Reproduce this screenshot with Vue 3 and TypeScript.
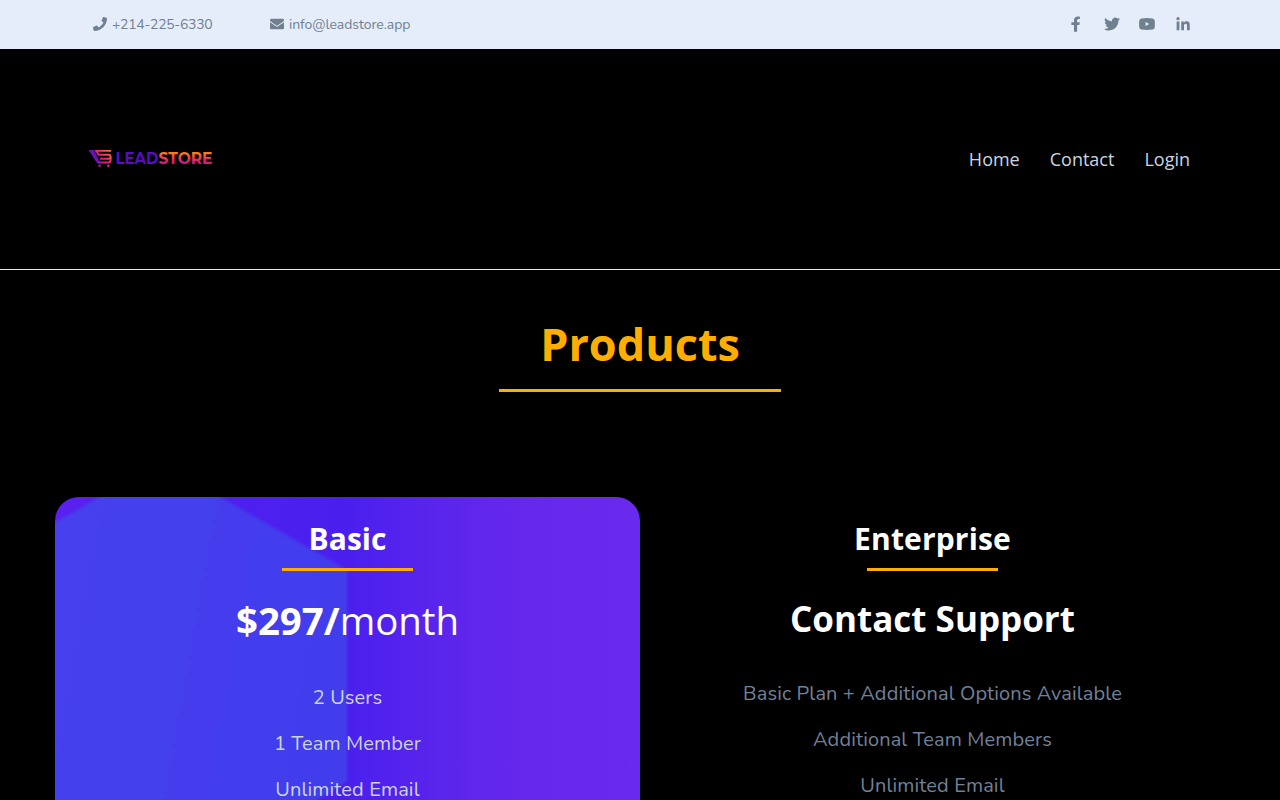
<template>
  <div class="page">
    <div class="topbar">
      <div class="contacts">
        <a class="contact phone" href="#">
          <svg class="contact-icon" viewBox="0 0 512 512">
            <path d="M493.4 24.6l-104-24c-11.3-2.6-22.9 3.3-27.5 13.9l-48 112c-4.2 9.8-1.4 21.3 6.9 28l60.6 49.6c-36 76.7-98.9 140.5-177.2 177.2l-49.6-60.6c-6.8-8.3-18.2-11.1-28-6.9l-112 48C3.9 366.5-2 378.1.6 389.4l24 104C27.1 504.2 36.7 512 48 512c256.1 0 464-207.5 464-464 0-11.2-7.7-20.9-18.6-23.4z" />
          </svg>
          <span class="contact-text">+214-225-6330</span>
        </a>
        <a class="contact email" href="#">
          <svg class="contact-icon" viewBox="0 0 512 512">
            <path d="M502.3 190.8c3.9-3.1 9.7-.2 9.7 4.7V400c0 26.5-21.5 48-48 48H48c-26.5 0-48-21.5-48-48V195.6c0-5 5.7-7.8 9.7-4.7 22.4 17.4 52.1 39.5 154.1 113.6 21.1 15.4 56.7 47.8 92.2 47.6 35.7.3 72-32.8 92.3-47.6 102-74.1 131.6-96.3 154-113.7zM256 320c23.2.4 56.6-29.2 73.4-41.4 132.7-96.3 142.8-104.7 173.4-128.7 5.8-4.5 9.2-11.5 9.2-18.9v-19c0-26.5-21.5-48-48-48H48c-26.5 0-48 21.5-48 48v19c0 7.4 3.4 14.3 9.2 18.9 30.6 23.9 40.7 32.4 173.4 128.7 16.8 12.2 50.2 41.8 73.4 41.4z" />
          </svg>
          <span class="contact-text">info@leadstore.app</span>
        </a>
      </div>
      <div class="socials">
        <svg v-for="icon in socials" :key="icon.name" class="social" viewBox="0 0 16 16">
          <path :d="icon.path" fill-rule="evenodd" />
        </svg>
      </div>
    </div>

    <header class="header">
      <svg class="logo" viewBox="0 0 126 20">
        <defs>
          <linearGradient id="cart" gradientUnits="userSpaceOnUse" x1="6" y1="16" x2="20" y2="0">
            <stop offset="0" stop-color="#7a12b0" />
            <stop offset="0.5" stop-color="#e81c78" />
            <stop offset="1" stop-color="#fb7030" />
          </linearGradient>
          <linearGradient id="store" x1="0" y1="0" x2="0" y2="1">
            <stop offset="0.25" stop-color="#fa7c22" />
            <stop offset="0.55" stop-color="#f32a60" />
            <stop offset="0.85" stop-color="#c01590" />
          </linearGradient>
        </defs>
        <path d="M.6 1H6L12.500 14.600H9.200z" fill="#6712b2" />
        <g fill="none" stroke="url(#cart)" stroke-width="1.900">
          <path d="M7 1.900H23M8.500 1.900L10.500 5.800H20.500Q22.600 5.900 22.600 7.800T20.500 9.800H12" />
          <path d="M10.500 13.500H20.500Q22.600 13.300 22.600 11V8" />
        </g>
        <circle cx="11.600" cy="16.700" r="1.300" fill="#a31aa6" />
        <circle cx="20.300" cy="16.700" r="1.300" fill="#e81c78" />
        <text x="27.500" y="14.500" textLength="43" lengthAdjust="spacingAndGlyphs" fill="#5a0cc0">LEAD</text>
        <text x="70.500" y="14.500" textLength="54" lengthAdjust="spacingAndGlyphs" fill="url(#store)">STORE</text>
      </svg>
      <nav class="nav">
        <a v-for="link in links" :key="link" href="#">{{ link }}</a>
      </nav>
    </header>

    <main>
      <h1 class="title">Products</h1>
      <div class="title-line"></div>
      <div class="plans">
        <section v-for="plan in plans" :key="plan.name" :class="['plan', plan.theme]">
          <svg v-if="plan.theme === 'basic'" class="plan-art" viewBox="0 0 585 330">
            <defs>
              <linearGradient id="violet" x1="0" y1="0" x2="1" y2="0">
                <stop offset="0" stop-color="#5a20ee" />
                <stop offset="0.3" stop-color="#4d20ee" />
                <stop offset="0.5" stop-color="#4a1fee" />
                <stop offset="0.6" stop-color="#5523ed" />
                <stop offset="0.7" stop-color="#5e26ec" />
                <stop offset="0.82" stop-color="#6628ec" />
                <stop offset="1" stop-color="#6a2aee" />
              </linearGradient>
              <linearGradient id="blue" x1="0" y1="0" x2="1" y2="0.2">
                <stop offset="0" stop-color="#4641ee" />
                <stop offset="1" stop-color="#423cec" />
              </linearGradient>
              <filter id="soften"><feGaussianBlur stdDeviation="1.500" /></filter>
            </defs>
            <rect width="585" height="330" fill="url(#violet)" />
            <path d="M-10 31L50-3H160L292 73V284L212 335H-10z" fill="url(#blue)" filter="url(#soften)" />
          </svg>
          <h2 class="plan-name">{{ plan.name }}</h2>
          <div class="plan-line"></div>
          <p class="price"><strong>{{ plan.price }}</strong>{{ plan.period }}</p>
          <ul class="features">
            <li v-for="feature in plan.features" :key="feature">{{ feature }}</li>
          </ul>
        </section>
      </div>
    </main>
  </div>
</template>

<script setup lang="ts">
interface Plan {
  name: string;
  theme: 'basic' | 'enterprise';
  price: string;
  period: string;
  features: string[];
}

const links = ['Home', 'Contact', 'Login'];

const socials = [
  {
    name: 'facebook',
    path: 'M6 15.700V9H3.400V6.200H6V4.300C6 1.900 7.500.5 9.700.5c1.100 0 2.200.2 2.200.2v2.400h-1.200c-1.200 0-1.600.8-1.600 1.500v1.600h2.700L11.400 9H9.100v6.700z',
  },
  {
    name: 'twitter',
    path: 'M14.400 4.700v.4c0 4.300-3.300 9.300-9.300 9.300-1.900 0-3.600-.5-5.100-1.500 1.800.2 3.500-.3 4.800-1.400-1.400 0-2.600-1-3-2.300.5.100 1 .1 1.500 0A3.300 3.300 0 0 1 .7 6v-.1c.4.200.9.4 1.500.4A3.300 3.300 0 0 1 1.200 2a9.300 9.300 0 0 0 6.700 3.400A3.300 3.300 0 0 1 13.500 2.500a6.400 6.400 0 0 0 2.100-.8 3.300 3.300 0 0 1-1.400 1.800 6.600 6.600 0 0 0 1.800-.5c-.4.700-1 1.200-1.600 1.700z',
  },
  {
    name: 'youtube',
    path: 'M2.500 2.400Q8 1.700 13.500 2.400Q15.400 2.700 15.700 4.600Q16.100 8 15.700 11.400Q15.400 13.300 13.500 13.600Q8 14.300 2.500 13.600Q.6 13.300.3 11.400Q-.1 8 .3 4.600Q.6 2.700 2.500 2.400zM6.600 5.900v4.200L10.200 8z',
  },
  {
    name: 'linkedin',
    path: 'M1.600 5.500h2.800v8.700H1.600zM3 1a1.600 1.600 0 1 1 0 3.300A1.600 1.600 0 0 1 3 1zM6.200 5.500h2.700v1.200c.5-.9 1.400-1.400 2.600-1.400 2.800 0 3.300 1.800 3.300 4.200v4.700H12v-4.100c0-1.100 0-2.400-1.400-2.400s-1.600 1.100-1.600 2.300v4.200H6.200z',
  },
];

const plans: Plan[] = [
  {
    name: 'Basic',
    theme: 'basic',
    price: '$297/',
    period: 'month',
    features: ['2 Users', '1 Team Member', 'Unlimited Email'],
  },
  {
    name: 'Enterprise',
    theme: 'enterprise',
    price: 'Contact Support',
    period: '',
    features: [
      'Basic Plan + Additional Options Available',
      'Additional Team Members',
      'Unlimited Email',
    ],
  },
];
</script>

<style>
body {
  background: #000;
  overflow: hidden;
}
</style>

<style scoped>
.page {
  background: #000;
  color: #fff;
  font-family: 'Open Sans', sans-serif;
}

a {
  color: inherit;
  text-decoration: none;
}

.topbar {
  display: flex;
  justify-content: space-between;
  align-items: center;
  box-sizing: border-box;
  height: 49px;
  padding: 0 89px 2px 93px;
  background: #e5edfb;
  color: #718090;
}

.contacts,
.contact,
.socials {
  display: flex;
  align-items: center;
}

.contact {
  gap: 5px;
  font-family: Nunito, 'Noto Sans', sans-serif;
  font-size: 14px;
  line-height: 20px;
}

.phone {
  width: 177px;
  letter-spacing: -0.3px;
}

.email {
  letter-spacing: -0.05px;
}

.contact-icon {
  width: 14px;
  height: 14px;
  fill: currentColor;
}

.contact-text {
  padding-top: 2px;
}

.socials {
  gap: 19.700px;
}

.social {
  width: 16px;
  height: 16px;
  fill: currentColor;
}

.header {
  display: flex;
  justify-content: space-between;
  align-items: center;
  box-sizing: border-box;
  height: 221px;
  padding: 0 90px 0 88px;
  border-bottom: 1px solid #e2e8f0;
}

.logo {
  width: 126px;
  height: 20px;
  font-family: Montserrat, Inter, sans-serif;
  font-size: 15.500px;
  font-weight: 700;
}

.nav {
  display: flex;
  gap: 30px;
  color: #cbd5e0;
  font-size: 18px;
  line-height: 27px;
}

.title {
  margin: 39px 0 0;
  color: #ffae00;
  font-size: 45px;
  font-weight: 700;
  line-height: 70px;
  text-align: center;
}

.title-line {
  width: 282px;
  height: 3px;
  margin: 10px auto 0;
  background: #ffae00;
}

.plans {
  display: flex;
  width: 1170px;
  margin: 105px auto 0;
}

.plan {
  position: relative;
  width: 585px;
  height: 330px;
  text-align: center;
}

.plan-art {
  position: absolute;
  inset: 0;
  width: 585px;
  height: 330px;
  border-radius: 24px 24px 0 0;
}

.plan-name,
.plan-line,
.price,
.features {
  position: relative;
}

.plan-name {
  margin: 0;
  padding-top: 19px;
  font-size: 30px;
  font-weight: 700;
  line-height: 45px;
}

.enterprise .plan-name {
  letter-spacing: 0.15px;
}

.plan-line {
  width: 131px;
  height: 3px;
  margin: 7px auto 0;
  background: #ffae00;
}

.price {
  margin: 19px 0 0;
  font-size: 38.400px;
  line-height: 60px;
}

.enterprise .price {
  margin-top: 20px;
  font-size: 35px;
  line-height: 56px;
}

.features {
  margin: 25px 0 0;
  padding: 0;
  list-style: none;
  color: #cbd5e0;
  font-family: Nunito, 'Noto Sans', sans-serif;
  font-size: 20px;
  letter-spacing: 0.12px;
  line-height: 46px;
  white-space: nowrap;
}

.enterprise .features {
  margin-top: 24px;
  color: #718096;
}
</style>
